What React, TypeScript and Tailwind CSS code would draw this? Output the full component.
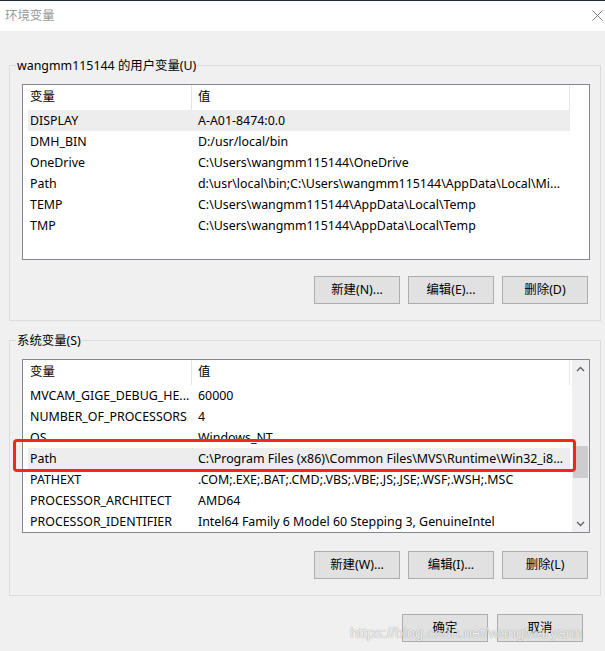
import React from 'react';

type Row = { name: string; value: string; band?: boolean };

const userRows: Row[] = [
  { name: 'DISPLAY', value: 'A-A01-8474:0.0', band: true },
  { name: 'DMH_BIN', value: 'D:/usr/local/bin' },
  { name: 'OneDrive', value: 'C:\\Users\\wangmm115144\\OneDrive' },
  { name: 'Path', value: 'd:\\usr\\local\\bin;C:\\Users\\wangmm115144\\AppData\\Local\\Mi...' },
  { name: 'TEMP', value: 'C:\\Users\\wangmm115144\\AppData\\Local\\Temp' },
  { name: 'TMP', value: 'C:\\Users\\wangmm115144\\AppData\\Local\\Temp' },
];

const systemRows: Row[] = [
  { name: 'MVCAM_GIGE_DEBUG_HE...', value: '60000' },
  { name: 'NUMBER_OF_PROCESSORS', value: '4' },
  { name: 'OS', value: 'Windows_NT' },
  { name: 'Path', value: 'C:\\Program Files (x86)\\Common Files\\MVS\\Runtime\\Win32_i8...', band: true },
  { name: 'PATHEXT', value: '.COM;.EXE;.BAT;.CMD;.VBS;.VBE;.JS;.JSE;.WSF;.WSH;.MSC' },
  { name: 'PROCESSOR_ARCHITECT', value: 'AMD64' },
  { name: 'PROCESSOR_IDENTIFIER', value: 'Intel64 Family 6 Model 60 Stepping 3, GenuineIntel' },
];

function Chevron({ up }: { up?: boolean }) {
  return (
    <svg width="9" height="6" viewBox="0 0 9 6" className="text-[#606060]">
      <polyline
        points={up ? '1,5 4.5,1.5 8,5' : '1,1 4.5,4.5 8,1'}
        fill="none"
        stroke="currentColor"
        strokeWidth="1.3"
      />
    </svg>
  );
}

function ListView({ rows, height, scroll }: { rows: Row[]; height: string; scroll?: boolean }) {
  return (
    <div className={`flex border border-[#828790] bg-white overflow-hidden ${height}`}>
      <div className="flex-1 min-w-0">
        <div className="flex h-[25px] items-center">
          <div className="w-[169px] h-full pl-[7px] flex items-center border-r border-[#e5e5e5]">变量</div>
          <div className="w-[378px] h-full pl-[6px] flex items-center border-r border-[#e5e5e5]">值</div>
        </div>
        {rows.map((r, i) => (
          <div
            key={i}
            className={`flex h-[21px] ml-[5px] w-[542px] items-center leading-[20px] whitespace-nowrap ${r.band ? 'bg-[#ededed]' : ''}`}
          >
            <div className="w-[164px] pl-[2px] overflow-hidden">{r.name}</div>
            <div className="flex-1 pl-[6px] overflow-hidden">{r.value}</div>
          </div>
        ))}
      </div>
      {scroll ? (
        <div className="w-[17px] bg-[#f0f0f0] flex flex-col items-center">
          <div className="h-[17px] flex items-center justify-center">
            <Chevron up />
          </div>
          <div className="flex-1">
            <div className="mt-[69px] h-[32px] w-[15px] bg-[#cdcdcd]" />
          </div>
          <div className="h-[17px] flex items-center justify-center">
            <Chevron />
          </div>
        </div>
      ) : (
        <div className="w-[17px]" />
      )}
    </div>
  );
}

function Button({ label }: { label: string }) {
  return (
    <button className="w-[86px] h-[28px] border border-[#adadad] bg-[#e1e1e1] text-black flex items-center justify-center">
      {label}
    </button>
  );
}

function Group({ title, children }: { title: string; children: React.ReactNode }) {
  return (
    <div className="relative border border-[#dcdcdc] pt-[18px] pb-[16px] pl-[12px] pr-[10px]">
      <div className="absolute left-[6px] top-[-8px] bg-[#f0f0f0] px-[1px] leading-[16px]">{title}</div>
      {children}
    </div>
  );
}

export default function App() {
  return (
    <div className="relative w-[605px] h-[651px] overflow-hidden bg-[#f0f0f0] text-[12.4px] text-black font-['Noto_Sans','Noto_Sans_CJK_SC',sans-serif]">
      {/* title bar */}
      <div className="h-[31px] border-t border-[#1f2b3a] bg-white flex items-center justify-between pl-[5px] pr-[2px]">
        <span className="text-[#999999] leading-[16px]">环境变量</span>
        <svg width="11" height="11" viewBox="0 0 11 11" className="text-[#808080] mt-[-1px]">
          <path d="M0.5 0.5 L10.5 10.5 M10.5 0.5 L0.5 10.5" stroke="currentColor" strokeWidth="1" fill="none" />
        </svg>
      </div>

      <div className="pl-[9px] pr-[4px] pt-[34px]">
        <Group title="wangmm115144 的用户变量(U)">
          <ListView rows={userRows} height="h-[176px]" />
          <div className="mt-[16px] flex justify-end gap-[8px] pr-[2px]">
            <Button label="新建(N)..." />
            <Button label="编辑(E)..." />
            <Button label="删除(D)" />
          </div>
        </Group>

        <div className="mt-[19px]">
          <Group title="系统变量(S)">
            <ListView rows={systemRows} height="h-[174px]" scroll />
            <div className="mt-[18px] flex justify-end gap-[8px] pr-[2px]">
              <Button label="新建(W)..." />
              <Button label="编辑(I)..." />
              <Button label="删除(L)" />
            </div>
          </Group>
        </div>

        <div className="mt-[18px] flex justify-end gap-[9px] pr-[18px]">
          <Button label="确定" />
          <Button label="取消" />
        </div>
      </div>

      {/* annotation */}
      <div className="absolute left-[13px] top-[439px] w-[563px] h-[33px] border-[3px] border-[#f3281d] rounded-[4px]" />

      {/* watermark */}
      <div className="absolute left-[350px] top-[622px] text-[15px] leading-[22px] font-['Liberation_Sans',sans-serif] text-white/85 [text-shadow:0_0_1px_rgba(0,0,0,0.5)] whitespace-nowrap">
        https://blog.csdn.net/wangMaryann
      </div>
    </div>
  );
}
